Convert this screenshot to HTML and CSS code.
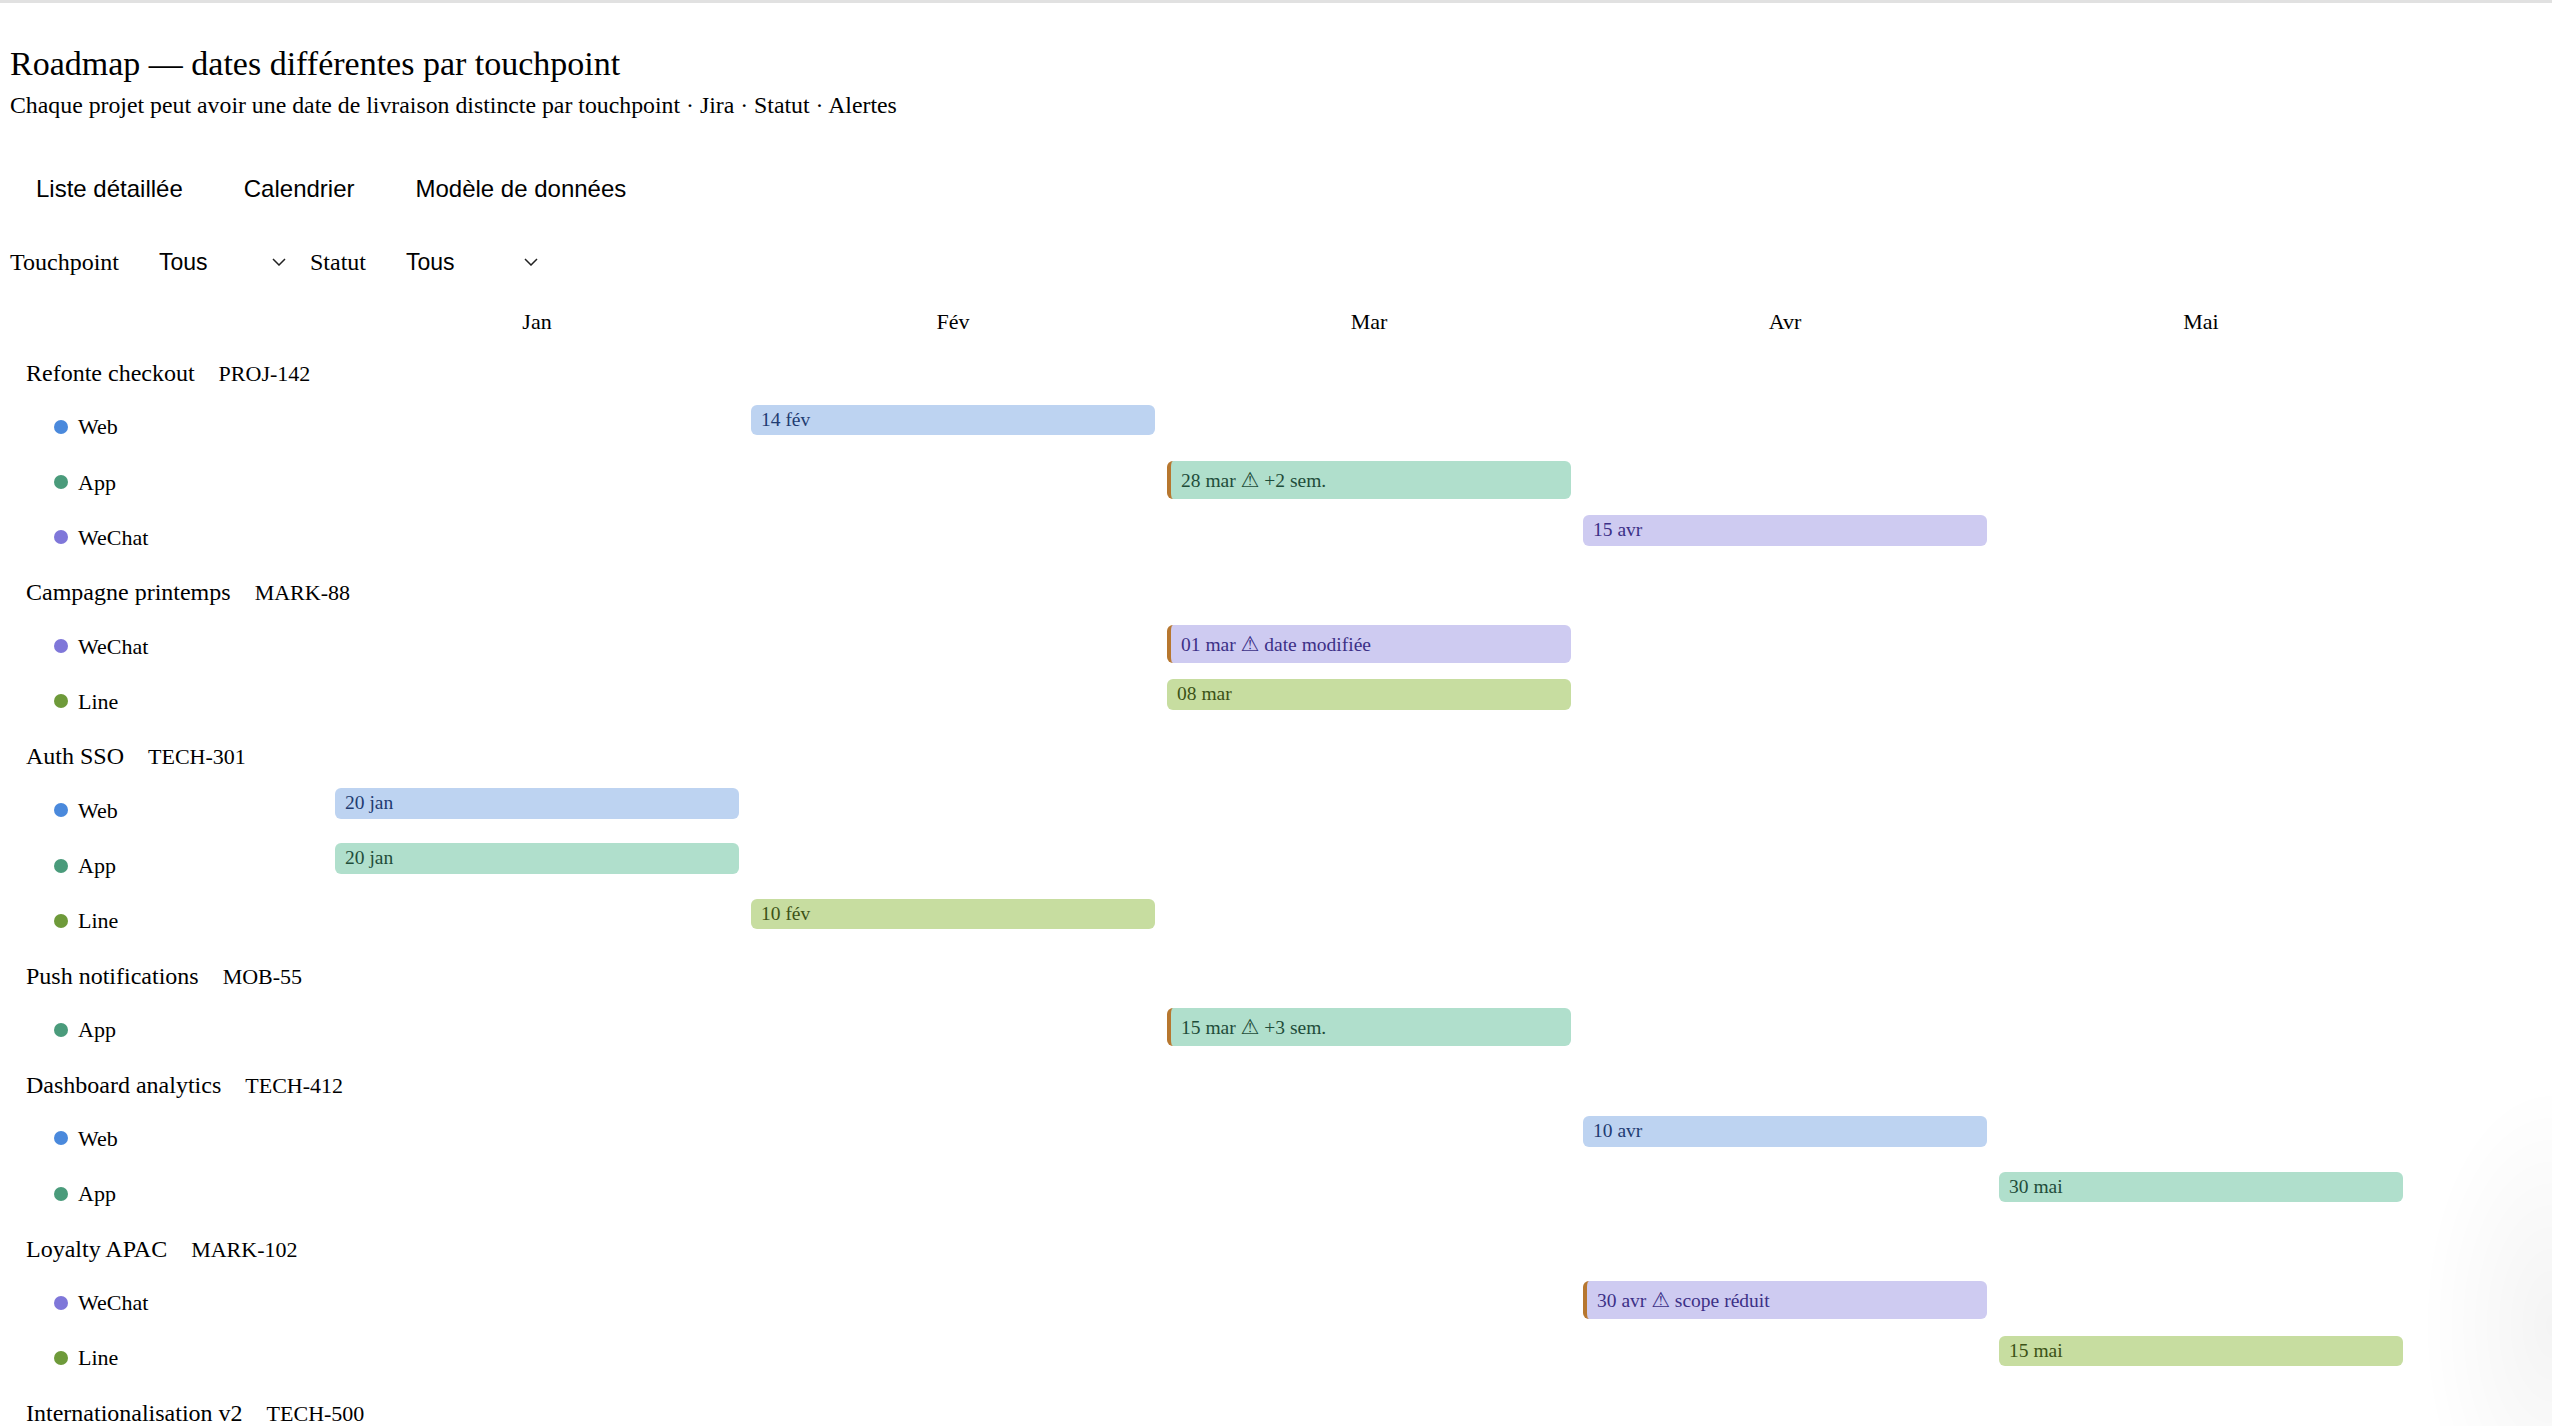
FILE: index.html
```html
<!DOCTYPE html>
<html lang="fr">
<head>
<meta charset="utf-8">
<title>Roadmap — dates différentes par touchpoint</title>
<link rel="stylesheet" href="styles.css">
</head>
<body>
<div class="topline"></div>
<main class="page">
  <h1 class="title">Roadmap — dates différentes par touchpoint</h1>
  <p class="subtitle">Chaque projet peut avoir une date de livraison distincte par touchpoint · Jira · Statut · Alertes</p>

  <nav class="tabs">
    <button class="tab">Liste détaillée</button>
    <button class="tab">Calendrier</button>
    <button class="tab">Modèle de données</button>
  </nav>

  <div class="filters">
    <span class="filter-label">Touchpoint</span>
    <div class="select"><span>Tous</span><svg class="chev" width="14" height="8" viewBox="0 0 14 8"><path d="M1 1 L7 7 L13 1" fill="none" stroke="#222" stroke-width="1.5"/></svg></div>
    <span class="filter-label">Statut</span>
    <div class="select wide"><span>Tous</span><svg class="chev" width="14" height="8" viewBox="0 0 14 8"><path d="M1 1 L7 7 L13 1" fill="none" stroke="#222" stroke-width="1.5"/></svg></div>
  </div>

  <section class="roadmap">
    <div class="row months">
      <div></div>
      <div class="month">Jan</div>
      <div class="month">Fév</div>
      <div class="month">Mar</div>
      <div class="month">Avr</div>
      <div class="month">Mai</div>
    </div>

    <div class="row project"><div class="proj-label"><span>Refonte checkout</span><span class="jira">PROJ-142</span></div></div>
    <div class="row tp"><div class="tp-label"><span class="dot web"></span>Web</div><div class="bar web c-fev">14 fév</div></div>
    <div class="row tp"><div class="tp-label"><span class="dot app"></span>App</div><div class="bar app alert c-mar">28 mar <span class="warn">⚠&#xFE0E;</span> +2 sem.</div></div>
    <div class="row tp"><div class="tp-label"><span class="dot wechat"></span>WeChat</div><div class="bar wechat c-avr">15 avr</div></div>

    <div class="row project"><div class="proj-label"><span>Campagne printemps</span><span class="jira">MARK-88</span></div></div>
    <div class="row tp"><div class="tp-label"><span class="dot wechat"></span>WeChat</div><div class="bar wechat alert c-mar">01 mar <span class="warn">⚠&#xFE0E;</span> date modifiée</div></div>
    <div class="row tp"><div class="tp-label"><span class="dot line"></span>Line</div><div class="bar line c-mar">08 mar</div></div>

    <div class="row project"><div class="proj-label"><span>Auth SSO</span><span class="jira">TECH-301</span></div></div>
    <div class="row tp"><div class="tp-label"><span class="dot web"></span>Web</div><div class="bar web c-jan">20 jan</div></div>
    <div class="row tp"><div class="tp-label"><span class="dot app"></span>App</div><div class="bar app c-jan">20 jan</div></div>
    <div class="row tp"><div class="tp-label"><span class="dot line"></span>Line</div><div class="bar line c-fev">10 fév</div></div>

    <div class="row project"><div class="proj-label"><span>Push notifications</span><span class="jira">MOB-55</span></div></div>
    <div class="row tp"><div class="tp-label"><span class="dot app"></span>App</div><div class="bar app alert c-mar">15 mar <span class="warn">⚠&#xFE0E;</span> +3 sem.</div></div>

    <div class="row project"><div class="proj-label"><span>Dashboard analytics</span><span class="jira">TECH-412</span></div></div>
    <div class="row tp"><div class="tp-label"><span class="dot web"></span>Web</div><div class="bar web c-avr">10 avr</div></div>
    <div class="row tp"><div class="tp-label"><span class="dot app"></span>App</div><div class="bar app c-mai">30 mai</div></div>

    <div class="row project"><div class="proj-label"><span>Loyalty APAC</span><span class="jira">MARK-102</span></div></div>
    <div class="row tp"><div class="tp-label"><span class="dot wechat"></span>WeChat</div><div class="bar wechat alert c-avr">30 avr <span class="warn">⚠&#xFE0E;</span> scope réduit</div></div>
    <div class="row tp"><div class="tp-label"><span class="dot line"></span>Line</div><div class="bar line c-mai">15 mai</div></div>

    <div class="row project last"><div class="proj-label"><span>Internationalisation v2</span><span class="jira">TECH-500</span></div></div>
  </section>
</main>
<div class="corner-shade"></div>
</body>
</html>
```

FILE: styles.css
```css
html, body {
  margin: 0;
  padding: 0;
  background: #ffffff;
  color: #000000;
  font-family: "Liberation Serif", "Times New Roman", serif;
}

body {
  height: 1426px;
  overflow: hidden;
}

.topline {
  height: 3px;
  background: #e1e1e1;
}

.page {
  padding: 0 0 0 10px;
}

.title {
  margin: 41px 0 0;
  font-size: 34px;
  line-height: 40px;
  font-weight: normal;
}

.subtitle {
  margin: 6.5px 0 0;
  font-size: 23.8px;
  line-height: 28px;
}

.tabs {
  margin-top: 56px;
  display: flex;
  gap: 9px;
  height: 28px;
}

.tab {
  font-family: "Liberation Sans", Arial, sans-serif;
  font-size: 24px;
  line-height: 28px;
  padding: 0 26px;
  margin: 0;
  border: 0;
  background: transparent;
  color: #000;
}

.filters {
  margin-top: 45.2px;
  height: 28px;
  display: flex;
  align-items: center;
}

.filter-label {
  font-size: 24px;
  line-height: 28px;
}

.select {
  display: flex;
  align-items: center;
  justify-content: space-between;
  box-sizing: border-box;
  width: 152px;
  height: 28px;
  margin: 0 13px 0 26px;
  padding: 0 11px 0 14px;
  font-family: "Liberation Sans", Arial, sans-serif;
  font-size: 23px;
  line-height: 28px;
}

.select.wide {
  width: 157px;
}

.chev {
  display: block;
  margin-top: 1px;
}

.roadmap {
  margin-top: 33.7px;
}

.row {
  display: grid;
  grid-template-columns: 313px repeat(5, 404px);
  column-gap: 12px;
}

.months {
  height: 36.4px;
}

.month {
  text-align: center;
  font-size: 22px;
  line-height: 26px;
}

.project {
  height: 53.7px;
  align-items: center;
}

.proj-label {
  grid-column: 1 / -1;
  display: flex;
  align-items: baseline;
  gap: 24px;
  padding: 2px 0 0 16px;
  font-size: 24px;
  line-height: 28px;
}

.jira {
  font-size: 22px;
}

.tp {
  height: 55.2px;
}

.tp-label {
  grid-column: 1;
  grid-row: 1;
  display: flex;
  align-items: center;
  gap: 10px;
  padding-left: 44px;
  font-size: 22px;
  line-height: 55.2px;
}

.dot {
  width: 14px;
  height: 14px;
  border-radius: 50%;
  flex: none;
}

.dot.web { background: #4a89dc; }
.dot.app { background: #4a9b7b; }
.dot.wechat { background: #7f77d9; }
.dot.line { background: #6e9a3a; }

.bar {
  grid-row: 1;
  align-self: start;
  margin-top: 5.5px;
  height: 30.5px;
  box-sizing: border-box;
  padding: 4px 10px 0;
  border-radius: 6px;
  font-size: 19.5px;
  line-height: 22.5px;
  white-space: nowrap;
  overflow: hidden;
}

.bar.alert {
  margin-top: 6px;
  height: 38px;
  padding-top: 8.9px;
  border-left: 4px solid #b7772f;
}

.warn {
  font-family: "DejaVu Sans", sans-serif;
  font-size: 21px;
  line-height: 20px;
}

.bar.web { background: #bdd3f1; color: #1f3c72; }
.bar.app { background: #b0dfcc; color: #1f4d3a; }
.bar.wechat { background: #cecbf1; color: #3c3087; }
.bar.line { background: #c7dda0; color: #3c5216; }

.c-jan { grid-column: 2; }
.c-fev { grid-column: 3; }
.c-mar { grid-column: 4; }
.c-avr { grid-column: 5; }
.c-mai { grid-column: 6; }

.corner-shade {
  position: fixed;
  right: 0;
  bottom: 0;
  width: 180px;
  height: 360px;
  background: radial-gradient(ellipse 130px 240px at 100% 72%, rgba(0, 0, 0, 0.045), rgba(0, 0, 0, 0) 100%);
  pointer-events: none;
}
```
